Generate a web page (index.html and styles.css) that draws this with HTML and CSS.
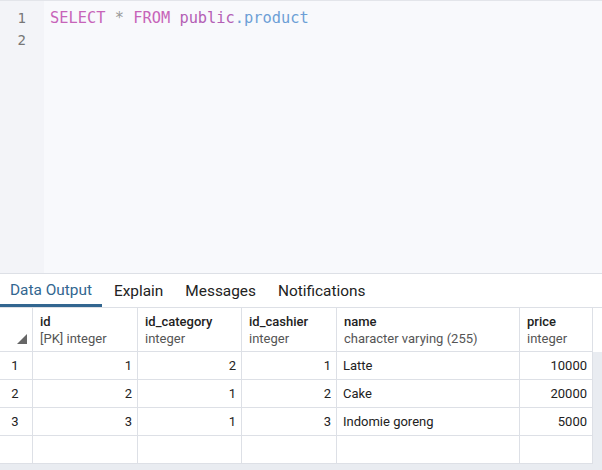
FILE: index.html
```
<!DOCTYPE html>
<html>
<head>
<meta charset="utf-8">
<link rel="stylesheet" href="styles.css">
</head>
<body>
<div class="editor">
  <div class="gutter">
    <div class="ln">1</div>
    <div class="ln">2</div>
  </div>
  <div class="code">
    <div class="line"><span class="kw">SELECT</span> <span class="op">*</span> <span class="kw">FROM</span> <span class="sch">public</span><span class="id">.product</span></div>
    <div class="line"></div>
  </div>
</div>
<div class="tabs">
  <div class="tab active">Data Output</div>
  <div class="tab">Explain</div>
  <div class="tab">Messages</div>
  <div class="tab">Notifications</div>
</div>
<div class="grid-wrap">
  <div class="head">
    <div class="grid">
      <div class="hc corner"><span class="tri"></span></div>
      <div class="hc"><div class="hn">id</div><div class="ht">[PK] integer</div></div>
      <div class="hc"><div class="hn">id_category</div><div class="ht">integer</div></div>
      <div class="hc"><div class="hn">id_cashier</div><div class="ht">integer</div></div>
      <div class="hc"><div class="hn">name</div><div class="ht">character varying (255)</div></div>
      <div class="hc"><div class="hn">price</div><div class="ht">integer</div></div>
    </div>
  </div>
  <div class="body">
    <div class="grid">
      <div class="c rn">1</div><div class="c num">1</div><div class="c num">2</div><div class="c num">1</div><div class="c">Latte</div><div class="c num">10000</div>
      <div class="c rn">2</div><div class="c num">2</div><div class="c num">1</div><div class="c num">2</div><div class="c">Cake</div><div class="c num">20000</div>
      <div class="c rn">3</div><div class="c num">3</div><div class="c num">1</div><div class="c num">3</div><div class="c">Indomie goreng</div><div class="c num">5000</div>
      <div class="c rn"></div><div class="c"></div><div class="c"></div><div class="c"></div><div class="c"></div><div class="c"></div>
    </div>
  </div>
</div>
</body>
</html>
```

FILE: styles.css
```
* { box-sizing: border-box; }
html, body { margin: 0; padding: 0; }
body {
  width: 602px;
  height: 470px;
  overflow: hidden;
  background: #ffffff;
  font-family: Roboto, "Liberation Sans", sans-serif;
  color: #222;
}
.editor {
  display: flex;
  height: 274px;
  border-top: 1px solid #e3e5ea;
  border-bottom: 1px solid #dde0e6;
  background: #f8f9fc;
}
.gutter {
  width: 44px;
  background: #f3f4f8;
  padding-top: 6px;
}
.ln {
  height: 22px;
  line-height: 22px;
  text-align: right;
  padding-right: 18px;
  font-family: "DejaVu Sans Mono", monospace;
  font-size: 14px;
  color: #777;
}
.code {
  flex: 1;
  padding: 6px 0 0 6px;
  font-family: "DejaVu Sans Mono", monospace;
  font-size: 15.35px;
}
.line { height: 22px; line-height: 22px; white-space: pre; }
.kw { color: #c764b9; }
.sch { color: #b45fb5; }
.id { color: #6c9fd6; }
.op { color: #999; }
.tabs {
  display: flex;
  height: 34px;
  border-bottom: 1px solid #dde0e6;
}
.tab {
  padding: 0 11px;
  height: 33px;
  line-height: 34px;
  font-size: 15.4px;
  color: #222;
}
.tab.active {
  color: #326690;
  padding: 0 10px 0 10px;
  border-bottom: 3px solid #326690;
  line-height: 33px;
}
.tab.active + .tab { padding-left: 12px; }
.grid-wrap {
  background: #e9ecf1;
  height: 162px;
}
.head { background: #fff; }
.grid {
  display: grid;
  grid-template-columns: 33px 105px 104px 95px 183px 73px;
  width: 593px;
}
.hc {
  height: 44px;
  border-right: 1px solid #dde0e6;
  border-bottom: 1px solid #dde0e6;
  padding: 5px 7px 0 7px;
  font-size: 13px;
  line-height: 17px;
  white-space: nowrap;
  overflow: hidden;
}
.hn { color: #222; font-weight: 500; }
.ht { color: #555; }
.corner { position: relative; }
.tri {
  position: absolute;
  right: 5px;
  bottom: 7px;
  width: 0;
  height: 0;
  border-left: 10px solid transparent;
  border-bottom: 10px solid #666;
}
.body .grid { background: #fff; }
.c {
  height: 28px;
  line-height: 27px;
  border-right: 1px solid #dde0e6;
  border-bottom: 1px solid #dde0e6;
  padding: 0 6px;
  font-size: 13px;
  color: #222;
  white-space: nowrap;
}
.num { text-align: right; padding-right: 5px; }
.rn { text-align: center; padding: 0 2px 0 0; }
```
